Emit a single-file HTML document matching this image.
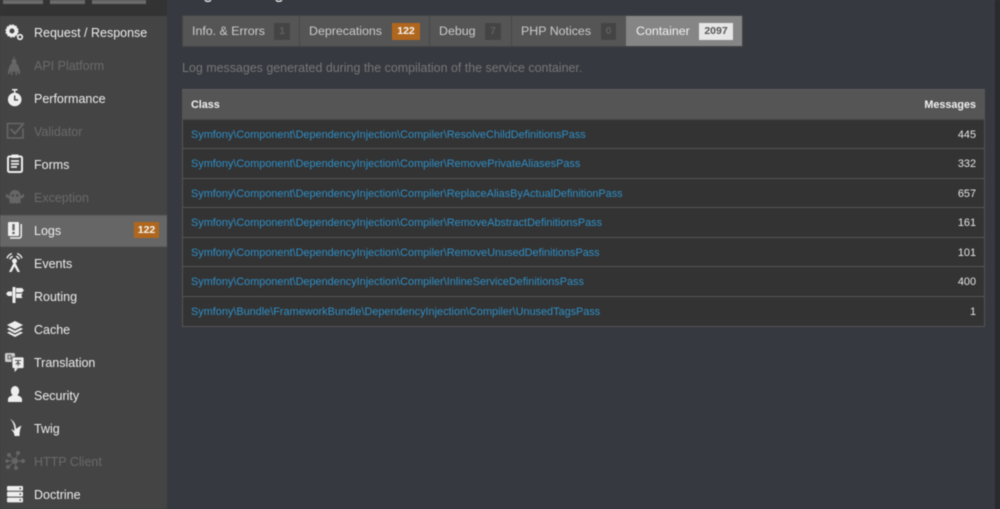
<!DOCTYPE html>
<html><head><meta charset="utf-8">
<style>
*{box-sizing:border-box;margin:0;padding:0}
html,body{width:1000px;height:509px;overflow:hidden;background:#36393f;font-family:"Liberation Sans",sans-serif}
#wrap{position:relative;width:1000px;height:509px;overflow:hidden;filter:blur(.4px)}
.a{position:absolute}
#side{left:0;top:0;width:167px;height:509px;background:#444}
#top{left:0;top:0;width:167px;height:16px;background:#333}
.tb{top:0;height:4px;background:#6b6b6b}
.it{position:absolute;left:34px;font-size:12.5px;line-height:16px;color:#eee;white-space:nowrap}
.dim{color:#6a6a6a}
svg.ic{position:absolute;left:4px;width:22px;height:22px}
#logs{left:0;top:215px;width:167px;height:32px;background:#666;border-top:1px solid #5c5c5c;border-bottom:1px solid #5c5c5c}
.badge{position:absolute;font-weight:bold;text-align:center}
#tabs{left:182px;top:15px;width:561px;height:32px;background:#555;border:1px solid #444}
.sep{position:absolute;top:16px;width:1px;height:30px;background:#484848}
.tab{position:absolute;top:23px;font-size:12.4px;line-height:16px;color:#ccc;white-space:nowrap}
.cnt{position:absolute;top:23px;height:17px;font-size:10.5px;line-height:17px;font-weight:bold;text-align:center;background:#444;color:#5f5f5f}
#tbl{left:182px;top:89px;width:803px;height:238px;background:#333;border:1px solid #555;border-top-color:#5e5e5e}
#th{left:183px;top:90px;width:801px;height:30px;background:#555;border-bottom:1px solid #484848}
.h{position:absolute;font-size:10.8px;font-weight:bold;color:#f2f2f2;line-height:14px;top:98px}
.l{position:absolute;left:191px;font-size:10.88px;line-height:14px;color:#2e8fc7;white-space:nowrap}
.n{position:absolute;right:24px;font-size:10.9px;line-height:14px;color:#e6e6e6}
.r{position:absolute;left:183px;width:801px;height:1px;background:#555}
</style></head><body><div id="wrap">
<div class="a" id="side"></div>
<div class="a" id="top"></div>
<div class="a tb" style="left:3px;width:40px"></div>
<div class="a tb" style="left:50px;width:35px"></div>
<div class="a tb" style="left:92px;width:54px"></div>
<div class="a" id="logs"></div>
<div class="a" style="left:995px;top:0;width:5px;height:509px;background:#2a2a2c"></div>

<svg class="ic" style="top:21px" viewBox="0 0 22 22"><circle cx="8" cy="10" r="4.2" fill="none" stroke="#eee" stroke-width="3.4"/><circle cx="8" cy="10" r="6.1" fill="none" stroke="#eee" stroke-width="1" stroke-dasharray="2 1.2"/><circle cx="16" cy="16" r="2.3" fill="none" stroke="#eee" stroke-width="1.7"/></svg>
<div class="it" style="top:25px">Request / Response</div>

<svg class="ic" style="top:55px" viewBox="0 0 22 22" fill="#666"><circle cx="10" cy="6.5" r="2.6"/><path d="M10 1.5v3" stroke="#666"/><rect x="6" y="8.500" width="8" height="8" rx="2.500"/><path d="M6 10 4 16v3h1.500l2-6zM14 10l2 6v3h-1.500l-2-6zM7 16v4h1.500v-4zM11.500 16v4H13v-4z"/></svg>
<div class="it dim" style="top:58px">API Platform</div>

<svg class="ic" style="top:87px" viewBox="0 0 22 22"><circle cx="10.700" cy="12.500" r="6.800" fill="#eee"/><rect x="8" y="2" width="5.500" height="1.500" fill="#eee"/><rect x="10" y="3.500" width="1.400" height="2.500" fill="#eee"/><path d="M10.700 8.500v4.400h3.400" fill="none" stroke="#444" stroke-width="1.400"/></svg>
<div class="it" style="top:91px">Performance</div>

<svg class="ic" style="top:120px" viewBox="0 0 22 22" fill="none" stroke="#666"><path d="M19 8.500V18H3.500V3.500H18" stroke-width="1.600"/><path d="M6.500 9l4.500 4.500L20 3" stroke-width="1.800"/></svg>
<div class="it dim" style="top:124px">Validator</div>

<svg class="ic" style="top:153px" viewBox="0 0 22 22"><rect x="4" y="3.500" width="14" height="15.500" rx="1.500" fill="none" stroke="#eee" stroke-width="2"/><rect x="7.500" y="1.500" width="7" height="3.500" fill="#eee"/><path d="M7 8h8M7 11h8M7 14h6" stroke="#eee" stroke-width="1.700"/></svg>
<div class="it" style="top:157px">Forms</div>

<svg class="ic" style="top:186px" viewBox="0 0 22 22" fill="#666"><path d="M5.500 18V9.500a5.500 5.500 0 0 1 11 0V18l-1.800-1.400-1.900 1.400-1.800-1.400-1.800 1.400-1.900-1.400z"/><path d="M2 7.500l3.500 2.500v3L2 11zM20 7.500l-3.500 2.500v3L20 11z"/><circle cx="8.800" cy="9.500" r="1.200" fill="#444"/><circle cx="13.200" cy="9.500" r="1.200" fill="#444"/></svg>
<div class="it dim" style="top:190px">Exception</div>

<svg class="ic" style="top:219px" viewBox="0 0 22 22"><path d="M17.200 5v12a2 2 0 0 1-2 2H6" fill="none" stroke="#eee" stroke-width="1.500"/><rect x="4" y="3" width="11" height="14" rx="1" fill="#eee"/><rect x="8.300" y="5" width="2.400" height="6.500" fill="#666"/><rect x="8.300" y="12.800" width="2.400" height="2.300" fill="#666"/></svg>
<div class="it" style="top:223px">Logs</div>
<div class="badge" style="left:134px;top:222px;width:25px;height:16px;background:#b0671d;color:#f5f5f5;font-size:10.500px;line-height:16px">122</div>

<svg class="ic" style="top:252px" viewBox="0 0 22 22"><circle cx="10.500" cy="9" r="2.500" fill="#eee"/><path d="M9.500 11 5 20h2.500l3-5.500 3 5.500H16l-4.500-9z" fill="#eee"/><path d="M5.800 7.300A5 5 0 0 1 8.800 4.300M12.200 4.300A5 5 0 0 1 15.200 7.300M3 6.300A8 8 0 0 1 7.800 1.500M13.200 1.500A8 8 0 0 1 18 6.300" fill="none" stroke="#eee" stroke-width="1.400"/></svg>
<div class="it" style="top:256px">Events</div>

<svg class="ic" style="top:285px" viewBox="0 0 22 22" fill="#eee"><rect x="8.500" y="2" width="3" height="16"/><path d="M12 3h6l2 2.200L18 7.500h-6zM12 8.500h6.500L17.300 10.700 18.500 13H12zM8 6.500H4L2 8.700 4 11h4z"/></svg>
<div class="it" style="top:289px">Routing</div>

<svg class="ic" style="top:318px" viewBox="0 0 22 22" fill="#eee"><path d="M11 3l8 4-8 4.200L3 7z"/><path d="M5.200 9.800 11 12.800l5.800-3 2.200 1.200-8 4.200L3 11z"/><path d="M5.200 13.600 11 16.600l5.800-3 2.200 1.200-8 4.200-8-4.200z"/></svg>
<div class="it" style="top:322px">Cache</div>

<svg class="ic" style="top:351px" viewBox="0 0 22 22"><rect x="1" y="2" width="10" height="9" rx="1.500" fill="#ccc"/><rect x="8" y="6" width="12" height="11.500" rx="1.500" fill="#eee" stroke="#444" stroke-width=".8"/><path d="M10.500 17v4l3.500-3.500z" fill="#eee"/><path d="M11 9.500h6M14 9v6M14 11l-2.200 2.500M14 11l2.200 2.500" stroke="#555" stroke-width="1" fill="none"/><path d="M4 4.200h3v3.600H4z" fill="none" stroke="#666"/></svg>
<div class="it" style="top:355px">Translation</div>

<svg class="ic" style="top:384px" viewBox="0 0 22 22" fill="#eee"><ellipse cx="11" cy="7" rx="4.200" ry="5"/><path d="M4 18v-2.500c0-2.800 3-3.300 4.800-4.500h4.400c1.800 1.200 4.800 1.700 4.800 4.500V18z"/></svg>
<div class="it" style="top:388px">Security</div>

<svg class="ic" style="top:417px" viewBox="0 0 22 22" fill="#eee"><path d="M6 2c3.500 1.500 6 5 6 10 1.500-1 3-2.500 5.500-3.500C16 12 15.500 15 15.500 19h-5c0-2-1-4.500-3.500-6.500 1.500 0 2.500.5 3.500 1.500C10.500 9 9 4.500 6 2z"/></svg>
<div class="it" style="top:421px">Twig</div>

<svg class="ic" style="top:450px" viewBox="0 0 22 22" fill="#666" stroke="#666"><circle cx="11" cy="11" r="2.500"/><circle cx="5" cy="5" r="1.500"/><circle cx="14" cy="3" r="1.500"/><circle cx="19" cy="11" r="1.500"/><circle cx="12" cy="18" r="1.500"/><circle cx="4" cy="17" r="1.500"/><circle cx="3" cy="11" r="1.200"/><path d="M5 5l6 6M14 3l-3 8M19 11h-8M12 18l-1-7M4 17l7-6M3 11h8" stroke-width="1" fill="none"/></svg>
<div class="it dim" style="top:454px">HTTP Client</div>

<svg class="ic" style="top:483px" viewBox="0 0 22 22"><rect x="3" y="3" width="16" height="4.800" rx="1" fill="#eee"/><rect x="3" y="8.800" width="16" height="4.800" rx="1" fill="#eee"/><rect x="3" y="14.600" width="16" height="4.800" rx="1" fill="#eee"/><path d="M15.500 5.400h1.500M15.500 11.200h1.500M15.500 17h1.500" stroke="#444" stroke-width="1.600"/></svg>
<div class="it" style="top:487px">Doctrine</div>

<div class="a" style="left:182px;top:-20px;font-size:18.8px;line-height:24px;color:#eee;white-space:nowrap">Log Messages</div>

<div class="a" id="tabs"></div>
<div class="sep" style="left:299px"></div>
<div class="sep" style="left:429px"></div>
<div class="sep" style="left:511px"></div>
<div class="a" style="left:626px;top:16px;width:116px;height:30px;background:#858585"></div>

<div class="tab" style="left:192px">Info. &amp; Errors</div>
<div class="cnt" style="left:274px;width:16px">1</div>
<div class="tab" style="left:309px">Deprecations</div>
<div class="cnt" style="left:392px;width:28px;background:#b0671d;color:#f5f5f5">122</div>
<div class="tab" style="left:439px">Debug</div>
<div class="cnt" style="left:485px;width:16px">7</div>
<div class="tab" style="left:521px">PHP Notices</div>
<div class="cnt" style="left:601px;width:15px">0</div>
<div class="tab" style="left:636px;color:#f2f2f2">Container</div>
<div class="cnt" style="left:699px;width:34px;background:#e6e6e6;color:#555">2097</div>

<div class="a" style="left:182px;top:60px;font-size:12.45px;line-height:16px;color:#777;white-space:nowrap">Log messages generated during the compilation of the service container.</div>

<div class="a" id="tbl"></div>
<div class="a" id="th"></div>
<div class="h" style="left:191px">Class</div>
<div class="h" style="right:24px">Messages</div>

<div class="l" style="top:128px">Symfony\Component\DependencyInjection\Compiler\ResolveChildDefinitionsPass</div><div class="n" style="top:128px">445</div>
<div class="r" style="top:148px"></div>
<div class="l" style="top:157px">Symfony\Component\DependencyInjection\Compiler\RemovePrivateAliasesPass</div><div class="n" style="top:157px">332</div>
<div class="r" style="top:178px"></div>
<div class="l" style="top:187px">Symfony\Component\DependencyInjection\Compiler\ReplaceAliasByActualDefinitionPass</div><div class="n" style="top:187px">657</div>
<div class="r" style="top:207px"></div>
<div class="l" style="top:216px">Symfony\Component\DependencyInjection\Compiler\RemoveAbstractDefinitionsPass</div><div class="n" style="top:216px">161</div>
<div class="r" style="top:237px"></div>
<div class="l" style="top:246px">Symfony\Component\DependencyInjection\Compiler\RemoveUnusedDefinitionsPass</div><div class="n" style="top:246px">101</div>
<div class="r" style="top:266px"></div>
<div class="l" style="top:275px">Symfony\Component\DependencyInjection\Compiler\InlineServiceDefinitionsPass</div><div class="n" style="top:275px">400</div>
<div class="r" style="top:296px"></div>
<div class="l" style="top:305px">Symfony\Bundle\FrameworkBundle\DependencyInjection\Compiler\UnusedTagsPass</div><div class="n" style="top:305px">1</div>
</div></body></html>
